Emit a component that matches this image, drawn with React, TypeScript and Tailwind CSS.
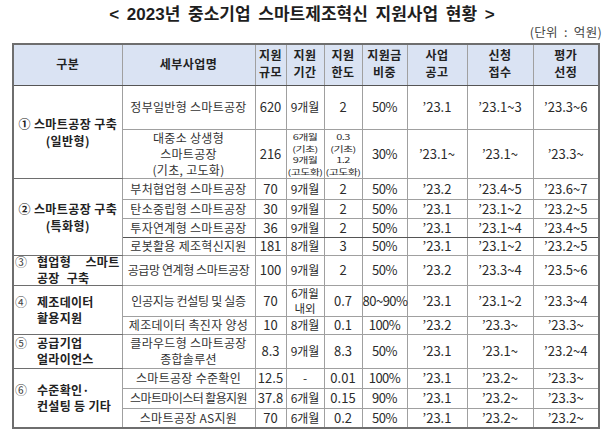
import type { ReactNode } from "react";

type Row = {
  h: string;
  name: ReactNode;
  nameClass?: string;
  size: string;
  period: ReactNode;
  limit: ReactNode;
  ratio: string;
  notice: string;
  apply: string;
  select: string;
  group?: { span: number; label: ReactNode };
  bottom?: string;
};

const Centered = ({ a, b }: { a: string; b: string }) => (
  <div className="text-center leading-[17px] tracking-[0.4px]">
    <div className="whitespace-nowrap">{a}</div>
    <div>{b}</div>
  </div>
);

// fixed-height box so two 16px lines never push a short row taller
const Hanging = ({ num, lines }: { num: string; lines: ReactNode[] }) => (
  <div className="h-[26px] flex flex-col justify-center">
    <div className="flex leading-[16px] tracking-[0.3px]">
      <span className="w-[23px] shrink-0 pl-[1px] font-normal text-[#444]">{num}</span>
      <div className="flex-1 pr-[2px]">
        {lines.map((l, i) => (
          <div key={i} className="whitespace-nowrap">
            {l}
          </div>
        ))}
      </div>
    </div>
  </div>
);

const Squeezed = ({ lines }: { lines: string[] }) => (
  <div className="h-[44px] flex items-center justify-center">
    <div className="scale-y-[0.72] flex flex-col items-center text-[11px] leading-[16px] tracking-[-0.6px]">
      {lines.map((l, i) => (
        <div key={i} className="whitespace-nowrap">
          {l}
        </div>
      ))}
    </div>
  </div>
);

const rows: Row[] = [
  {
    h: "h-[44px]",
    name: "정부일반형 스마트공장",
    size: "620",
    period: "9개월",
    limit: "2",
    ratio: "50%",
    notice: "’23.1",
    apply: "’23.1~3",
    select: "’23.3~6",
    group: { span: 2, label: <Centered a="① 스마트공장 구축" b="(일반형)" /> },
  },
  {
    h: "h-[48px]",
    name: (
      <div className="leading-[16px]">
        <div>대중소 상생형</div>
        <div>스마트공장</div>
        <div>(기초, 고도화)</div>
      </div>
    ),
    size: "216",
    period: <Squeezed lines={["6개월", "(기초)", "9개월", "(고도화)"]} />,
    limit: <Squeezed lines={["0.3", "(기초)", "1.2", "(고도화)"]} />,
    ratio: "30%",
    notice: "’23.1~",
    apply: "’23.1~",
    select: "’23.3~",
  },
  {
    h: "h-[21px]",
    name: "부처협업형 스마트공장",
    size: "70",
    period: "9개월",
    limit: "2",
    ratio: "50%",
    notice: "’23.2",
    apply: "’23.4~5",
    select: "’23.6~7",
    group: { span: 4, label: <Centered a="② 스마트공장 구축" b="(특화형)" /> },
  },
  {
    h: "h-[19px]",
    name: "탄소중립형 스마트공장",
    size: "30",
    period: "9개월",
    limit: "2",
    ratio: "50%",
    notice: "’23.1",
    apply: "’23.1~2",
    select: "’23.2~5",
  },
  {
    h: "h-[19px]",
    name: "투자연계형 스마트공장",
    size: "36",
    period: "9개월",
    limit: "2",
    ratio: "50%",
    notice: "’23.1",
    apply: "’23.1~4",
    select: "’23.4~5",
    bottom: "border-b-[#555]",
  },
  {
    h: "h-[18px]",
    name: "로봇활용 제조혁신지원",
    size: "181",
    period: "8개월",
    limit: "3",
    ratio: "50%",
    notice: "’23.1",
    apply: "’23.1~2",
    select: "’23.2~5",
  },
  {
    h: "h-[30px]",
    name: "공급망 연계형 스마트공장",
    nameClass: "tracking-[-0.4px]",
    size: "100",
    period: "9개월",
    limit: "2",
    ratio: "50%",
    notice: "’23.2",
    apply: "’23.3~4",
    select: "’23.5~6",
    group: {
      span: 1,
      label: (
        <Hanging
          num="③"
          lines={[
            <div className="flex justify-between">
              <span>협업형</span>
              <span>스마트</span>
            </div>,
            <span className="[word-spacing:4px]">공장 구축</span>,
          ]}
        />
      ),
    },
  },
  {
    h: "h-[30px]",
    name: "인공지능 컨설팅 및 실증",
    nameClass: "tracking-[-0.3px]",
    size: "70",
    period: (
      <div className="text-[11.5px] leading-[15px]">
        <div>6개월</div>
        <div>내외</div>
      </div>
    ),
    limit: "0.7",
    ratio: "80~90%",
    notice: "’23.1",
    apply: "’23.1~2",
    select: "’23.3~4",
    group: { span: 2, label: <Hanging num="④" lines={["제조데이터", "활용지원"]} /> },
  },
  {
    h: "h-[18px]",
    name: "제조데이터 촉진자 양성",
    size: "10",
    period: "8개월",
    limit: "0.1",
    ratio: "100%",
    notice: "’23.2",
    apply: "’23.3~",
    select: "’23.3~",
  },
  {
    h: "h-[34px]",
    name: (
      <div className="leading-[16px]">
        <div>클라우드형 스마트공장</div>
        <div>종합솔루션</div>
      </div>
    ),
    size: "8.3",
    period: "9개월",
    limit: "8.3",
    ratio: "50%",
    notice: "’23.1",
    apply: "’23.1~",
    select: "’23.2~4",
    group: { span: 1, label: <Hanging num="⑤" lines={["공급기업", "얼라이언스"]} /> },
  },
  {
    h: "h-[20px]",
    name: "스마트공장 수준확인",
    size: "12.5",
    period: "-",
    limit: "0.01",
    ratio: "100%",
    notice: "’23.1",
    apply: "’23.2~",
    select: "’23.3~",
    group: {
      span: 3,
      label: <Hanging num="⑥" lines={["수준확인·", "컨설팅 등 기타"]} />,
    },
  },
  {
    h: "h-[20px]",
    name: "스마트마이스터 활용지원",
    nameClass: "tracking-[-0.6px]",
    size: "37.8",
    period: "6개월",
    limit: "0.15",
    ratio: "90%",
    notice: "’23.1",
    apply: "’23.2~",
    select: "’23.3~",
  },
  {
    h: "h-[20px]",
    name: "스마트공장 AS지원",
    size: "70",
    period: "6개월",
    limit: "0.2",
    ratio: "50%",
    notice: "’23.1",
    apply: "’23.2~",
    select: "’23.2~",
  },
];

const headers: string[][] = [
  ["구분"],
  ["세부사업명"],
  ["지원", "규모"],
  ["지원", "기간"],
  ["지원", "한도"],
  ["지원금", "비중"],
  ["사업", "공고"],
  ["신청", "접수"],
  ["평가", "선정"],
];

const cell = "border border-[#a0a0a0] p-0 text-center align-middle";

export default function App() {
  return (
    <div className="w-[613px] h-[436px] bg-white font-['Noto_Sans_CJK_KR','Noto_Sans',sans-serif] text-[#2b2b2b] overflow-hidden">
      <div className="pt-[5px] pl-[12px] pr-[21px] text-center text-[17px] leading-[20px] font-bold text-[#1e1e1e] [word-spacing:3px] font-['Liberation_Sans','Noto_Sans_CJK_KR',sans-serif]">
        &lt; 2023년 중소기업 스마트제조혁신 지원사업 현황 &gt;
      </div>
      <div className="pr-[11px] text-right text-[12.5px] leading-[14px] text-[#444] tracking-[0.3px] [word-spacing:3px]">
        (단위 : 억원)
      </div>
      <div className="pl-[12px] pt-[4px]">
        <table className="table-fixed border-collapse w-[586px] border-2 border-[#6e6e6e]">
          <colgroup>
            <col className="w-[109px]" />
            <col className="w-[133px]" />
            <col className="w-[31px]" />
            <col className="w-[38px]" />
            <col className="w-[38px]" />
            <col className="w-[45px]" />
            <col className="w-[60px]" />
            <col className="w-[66px]" />
            <col className="w-[66px]" />
          </colgroup>
          <thead>
            <tr className="h-[41px]">
              {headers.map((h, i) => (
                <th
                  key={i}
                  className={`${cell} border-b-[#555] bg-[#dae3f3] pb-[3px] text-[12px] leading-[17px] tracking-[0.5px] font-bold text-[#222]`}
                >
                  {h.map((line) => (
                    <div key={line} className="whitespace-nowrap">
                      {line}
                    </div>
                  ))}
                </th>
              ))}
            </tr>
          </thead>
          <tbody className="text-[13px] leading-[16px]">
            {rows.map((r, i) => (
              <tr key={i} className={r.h}>
                {r.group && (
                  <td
                    rowSpan={r.group.span}
                    className={`${cell} border-b-[#6e6e6e] text-left text-[12px] font-bold text-[#222]`}
                  >
                    {r.group.label}
                  </td>
                )}
                <td className={`${cell} ${r.bottom ?? ""} whitespace-nowrap text-[12px] text-[#333] ${r.nameClass ?? "tracking-[0.3px]"}`}>
                  {r.name}
                </td>
                <td className={`${cell} ${r.bottom ?? ""}`}>{r.size}</td>
                <td className={`${cell} ${r.bottom ?? ""} text-[12px]`}>{r.period}</td>
                <td className={`${cell} ${r.bottom ?? ""}`}>{r.limit}</td>
                <td className={`${cell} ${r.bottom ?? ""} whitespace-nowrap tracking-[-0.5px]`}>{r.ratio}</td>
                <td className={`${cell} ${r.bottom ?? ""}`}>{r.notice}</td>
                <td className={`${cell} ${r.bottom ?? ""}`}>{r.apply}</td>
                <td className={`${cell} ${r.bottom ?? ""}`}>{r.select}</td>
              </tr>
            ))}
          </tbody>
        </table>
      </div>
    </div>
  );
}
